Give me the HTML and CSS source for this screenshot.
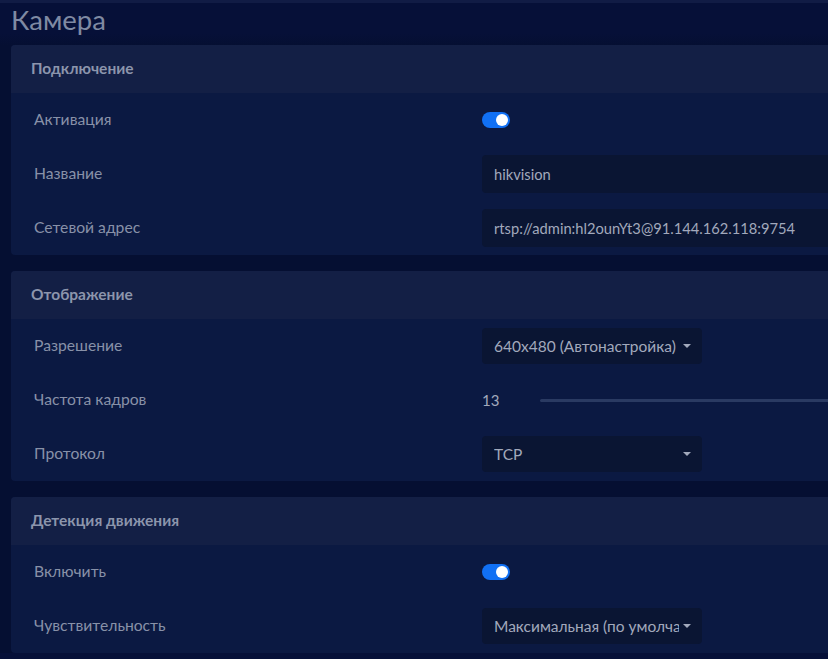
FILE: index.html
```html
<!DOCTYPE html>
<html lang="ru">
<head>
<meta charset="utf-8">
<link rel="stylesheet" href="styles.css">
</head>
<body>
<div class="topstrip"></div>
<div class="page">
  <h1 class="title">Камера</h1>

  <section class="card">
    <div class="card-head">Подключение</div>
    <div class="card-body">
      <div class="row">
        <div class="label">Активация</div>
        <div class="value"><span class="toggle"><span class="knob"></span></span></div>
      </div>
      <div class="row">
        <div class="label">Название</div>
        <div class="value"><div class="input">hikvision</div></div>
      </div>
      <div class="row">
        <div class="label">Сетевой адрес</div>
        <div class="value"><div class="input">rtsp://admin:hl2ounYt3@91.144.162.118:9754</div></div>
      </div>
    </div>
  </section>

  <section class="card">
    <div class="card-head">Отображение</div>
    <div class="card-body">
      <div class="row">
        <div class="label">Разрешение</div>
        <div class="value"><div class="select"><span class="sel-text">640x480 (Автонастройка)</span><span class="caret"></span></div></div>
      </div>
      <div class="row">
        <div class="label">Частота кадров</div>
        <div class="value slider-wrap"><span class="num">13</span><span class="track"></span></div>
      </div>
      <div class="row">
        <div class="label">Протокол</div>
        <div class="value"><div class="select"><span class="sel-text">TCP</span><span class="caret"></span></div></div>
      </div>
    </div>
  </section>

  <section class="card">
    <div class="card-head">Детекция движения</div>
    <div class="card-body">
      <div class="row">
        <div class="label">Включить</div>
        <div class="value"><span class="toggle"><span class="knob"></span></span></div>
      </div>
      <div class="row">
        <div class="label">Чувствительность</div>
        <div class="value"><div class="select"><span class="sel-text">Максимальная (по умолчанию)</span><span class="caret"></span></div></div>
      </div>
    </div>
  </section>
</div>
</body>
</html>
```

FILE: styles.css
```css
html, body {
  margin: 0;
  padding: 0;
}
body {
  background: #061038;
  font-family: "Lato", "Open Sans", sans-serif;
  overflow: hidden;
  width: 828px;
  height: 659px;
}
.topstrip {
  height: 3px;
  background: #111c45;
}
.page {
  padding-left: 11px;
  width: 940px;
  background: linear-gradient(#061038 0, #061038 30px, #050f32 42px, #050f32 100%);
}
.title {
  margin: 0;
  height: 42px;
  font-size: 27.5px;
  font-weight: 400;
  line-height: 33px;
  color: #7f8aa3;
}
.card {
  border-radius: 4px;
  overflow: hidden;
  margin-bottom: 16px;
  background: #0b1942;
}
.card-head {
  height: 48px;
  display: flex;
  align-items: center;
  padding-left: 20px;
  padding-bottom: 2px;
  box-sizing: border-box;
  background: #131f45;
  color: #8c95ac;
  font-weight: 700;
  font-size: 15.5px;
}
.card-body {
  display: flex;
  flex-direction: column;
}
.row {
  height: 54px;
  display: flex;
  align-items: center;
}
.label {
  width: 448px;
  padding-left: 23px;
  padding-bottom: 2px;
  color: #8891a8;
  font-size: 15.7px;
}
.value {
  flex: 1;
  display: flex;
  align-items: center;
}
.toggle {
  width: 28px;
  height: 16px;
  border-radius: 8px;
  background: #1170f4;
  display: flex;
  align-items: center;
  justify-content: flex-end;
  padding-right: 2px;
  box-sizing: border-box;
}
.knob {
  width: 12px;
  height: 12px;
  border-radius: 50%;
  background: #ffffff;
}
.input {
  width: 100%;
  height: 38px;
  border-radius: 4px;
  background: #0a1533;
  color: #a2a9bc;
  font-size: 14.7px;
  display: flex;
  align-items: center;
  padding-left: 12px;
  padding-bottom: 1px;
  box-sizing: border-box;
}
.select {
  width: 220px;
  height: 36px;
  border-radius: 4px;
  background: #0a1533;
  color: #a2a9bc;
  font-size: 15.5px;
  display: flex;
  align-items: center;
  padding: 0 11px 1px 12px;
  box-sizing: border-box;
}
.sel-text {
  flex: 1;
  white-space: nowrap;
  overflow: hidden;
  min-width: 0;
}
.caret {
  margin-left: 4px;
  width: 0;
  height: 0;
  border-left: 4px solid transparent;
  border-right: 4px solid transparent;
  border-top: 4px solid #a2a9bc;
  flex: none;
}
.num {
  width: 58px;
  color: #a2a9bc;
  font-size: 15px;
  padding-bottom: 1px;
}
.track {
  flex: 1;
  height: 3px;
  border-radius: 2px;
  background: #2a3a62;
}
```
